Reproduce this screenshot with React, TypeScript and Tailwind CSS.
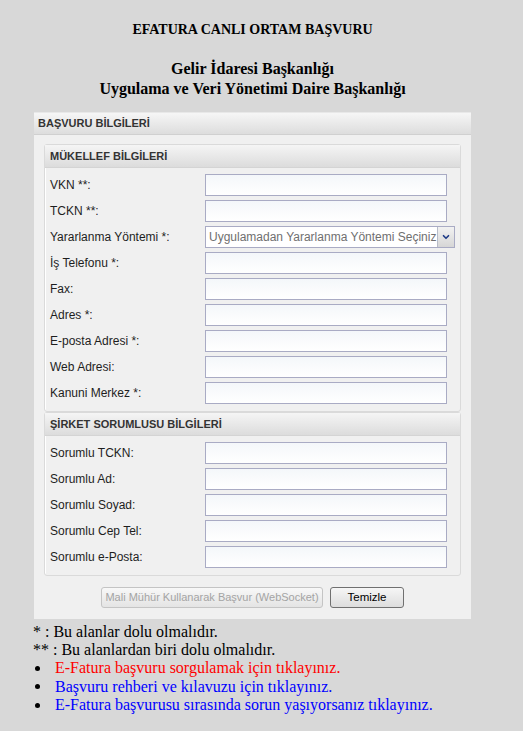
import { ChevronDown } from "lucide-react"

const ui = "font-['Liberation_Sans',Arial,sans-serif]"

function Field({ label }: { label: string }) {
  return (
    <div className="flex items-center h-[22px]">
      <span className="w-[155px] text-[12px] text-[#1e1e1e]">{label}</span>
      <input
        type="text"
        className="w-[242px] h-[22px] border border-[#a9abc4] bg-gradient-to-b from-[#f4f7fa] to-white outline-none"
      />
    </div>
  )
}

function Section({ title, children }: { title: string; children: React.ReactNode }) {
  return (
    <div className="mx-[10px] border border-[#dadada] rounded-[3px] shadow-[inset_1px_1px_0_#fff]">
      <div className="h-[23px] flex items-center pl-[5px] border-b border-[#d4d4d4] bg-gradient-to-b from-[#f5f5f5] to-[#dcdcdc] text-[11px] font-bold text-[#333]">
        {title}
      </div>
      <div className="flex flex-col gap-[4px] pl-[5px] pt-[6px] pb-[7px]">{children}</div>
    </div>
  )
}

function Bullet({ color, children }: { color: string; children: React.ReactNode }) {
  return (
    <li className="flex items-center">
      <span className="w-[22px] pl-[2px]">
        <span className="block w-[5px] h-[5px] rounded-full bg-black" />
      </span>
      <span className={color}>{children}</span>
    </li>
  )
}

export default function App() {
  return (
    <div className="min-h-[731px] bg-[#d8d8d8] pt-[21px] pb-4">
      <div className="w-[505px] font-['Liberation_Serif','Times_New_Roman',serif] font-bold text-center text-black">
        <h2 className="text-[14px] leading-[18px]">EFATURA CANLI ORTAM BAŞVURU</h2>
        <h3 className="mt-[20px] text-[16px] leading-[20px]">
          Gelir İdaresi Başkanlığı
          <br />
          Uygulama ve Veri Yönetimi Daire Başkanlığı
        </h3>
      </div>

      <div className={`${ui} ml-[34px] mt-[13px] w-[437px] bg-[#f0f0f0] border-t border-[#e8e8e8]`}>
        <div className="h-[22px] flex items-center pl-[4px] border-b border-[#d0d0d0] bg-gradient-to-b from-[#f6f6f6] to-[#dddddd] text-[11px] font-bold text-[#333]">
          BAŞVURU BİLGİLERİ
        </div>

        <div className="pt-[9px]">
          <Section title="MÜKELLEF BİLGİLERİ">
            <Field label="VKN **:" />
            <Field label="TCKN **:" />
            <div className="flex items-center h-[22px]">
              <span className="w-[155px] text-[12px] text-[#1e1e1e]">Yararlanma Yöntemi *:</span>
              <div className="w-[250px] h-[22px] flex border border-[#a9abc4] bg-white">
                <span className="flex-1 pl-[3px] text-[12px] leading-[20px] text-[#6f6f6f] whitespace-nowrap overflow-hidden">
                  Uygulamadan Yararlanma Yöntemi Seçiniz
                </span>
                <span className="w-[17px] flex items-center justify-center border-l border-[#b8bcc8] bg-gradient-to-b from-[#f2f2f2] to-[#d6d6d6]">
                  <ChevronDown className="w-[10px] h-[10px] text-[#1f3c88]" strokeWidth={4} />
                </span>
              </div>
            </div>
            <Field label="İş Telefonu *:" />
            <Field label="Fax:" />
            <Field label="Adres *:" />
            <Field label="E-posta Adresi *:" />
            <Field label="Web Adresi:" />
            <Field label="Kanuni Merkez *:" />
          </Section>

          <Section title="ŞİRKET SORUMLUSU BİLGİLERİ">
            <Field label="Sorumlu TCKN:" />
            <Field label="Sorumlu Ad:" />
            <Field label="Sorumlu Soyad:" />
            <Field label="Sorumlu Cep Tel:" />
            <Field label="Sorumlu e-Posta:" />
          </Section>
        </div>

        <div className="flex justify-center gap-[7px] pt-[11px] pb-[11px]">
          <button className="w-[222px] h-[21px] rounded-[3px] border border-[#c4c4c4] bg-gradient-to-b from-[#f8f8f8] to-[#e4e4e4] text-[11px] text-[#a4a4a4] whitespace-nowrap">
            Mali Mühür Kullanarak Başvur (WebSocket)
          </button>
          <button className="w-[74px] h-[21px] rounded-[3px] border border-[#707070] bg-gradient-to-b from-[#f6f6f6] to-[#dddddd] text-[11.5px] text-black">
            Temizle
          </button>
        </div>
      </div>

      <div className="font-['Liberation_Serif','Times_New_Roman',serif] text-[16px] leading-[18px] pl-[33px] pt-[4px] text-black">
        <div>* : Bu alanlar dolu olmalıdır.</div>
        <div>** : Bu alanlardan biri dolu olmalıdır.</div>
        <ul className="leading-[18.5px]">
          <Bullet color="text-[#ff0000]">E-Fatura başvuru sorgulamak için tıklayınız.</Bullet>
          <Bullet color="text-[#0000ff]">Başvuru rehberi ve kılavuzu için tıklayınız.</Bullet>
          <Bullet color="text-[#0000ff]">E-Fatura başvurusu sırasında sorun yaşıyorsanız tıklayınız.</Bullet>
        </ul>
      </div>
    </div>
  )
}
